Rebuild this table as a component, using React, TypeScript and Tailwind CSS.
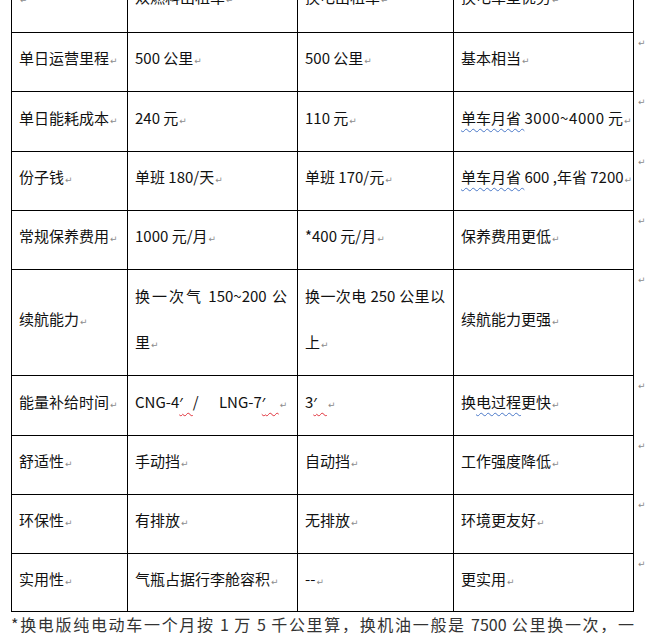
import React from "react";

const Mark = () => (
  <span className="ml-[1px] font-['DejaVu_Sans',sans-serif] text-[9px] leading-none text-[#8c8c8c]">↵</span>
);

const Blue = ({ children }: { children: React.ReactNode }) => (
  <span className="underline decoration-wavy decoration-[#4a78c8] decoration-1 underline-offset-[4px]">{children}</span>
);
const Red = ({ children }: { children: React.ReactNode }) => (
  <span className="underline decoration-wavy decoration-[#e0303a] decoration-1 underline-offset-[4px]">{children}</span>
);
const Prime = () => <span className="font-['Noto_Sans',sans-serif]">′</span>;

type Row = { h: string; cells: React.ReactNode[] };

const rows: Row[] = [
  { h: "h-[63px]", cells: [<></>, <>双燃料出租车</>, <>换电出租车</>, <>换电车型优势</>] },
  { h: "h-[59px]", cells: [<>单日运营里程</>, <>500 公里</>, <>500 公里</>, <>基本相当</>] },
  { h: "h-[60px]", cells: [<>单日能耗成本</>, <>240 元</>, <>110 元</>, <><Blue>单车月省 </Blue><span className="tracking-[0.6px]">3000~4000</span> 元</>] },
  { h: "h-[59px]", cells: [<>份子钱</>, <>单班 180/天</>, <>单班 170/元</>, <><Blue>单车月省 </Blue>600 ,年省 7200</>] },
  { h: "h-[59px]", cells: [<>常规保养费用</>, <>1000 元/月</>, <>*400 元/月</>, <>保养费用更低</>] },
  {
    h: "h-[106px]",
    cells: [<>续航能力</>, "wrap1", "wrap2", <>续航能力更强</>],
  },
  {
    h: "h-[60px]",
    cells: [
      <>能量补给时间</>,
      <span className="whitespace-pre">CNG-4<Red><Prime />   </Red>/      LNG-7<Red><Prime />    </Red></span>,
      <span className="whitespace-pre">3<Red><Prime />   </Red></span>,
      <>换<Blue>电过程</Blue>更快</>,
    ],
  },
  { h: "h-[59px]", cells: [<>舒适性</>, <>手动挡</>, <>自动挡</>, <>工作强度降低</>] },
  { h: "h-[59px]", cells: [<>环保性</>, <>有排放</>, <>无排放</>, <>环境更友好</>] },
  { h: "h-[58px]", cells: [<>实用性</>, <>气瓶占据行李舱容积</>, <>--</>, <>更实用</>] },
];

const widths = ["w-[117px] border-l", "w-[170px]", "w-[156px]", "w-[180px]"];

export default function App() {
  return (
    <div className="h-[633px] w-[645px] overflow-hidden bg-white font-['Noto_Sans_CJK_SC',sans-serif] text-[15px] text-[#111]">
      <div className="mt-[-30px] ml-[11px] flex flex-col">
        {rows.map((r, ri) => (
          <div key={ri} className={"flex " + r.h}>
            {r.cells.map((c, ci) => (
              <div
                key={ci}
                className={
                  "flex shrink-0 items-center overflow-hidden whitespace-nowrap border-r border-b border-black pb-[7px] pl-[7px] pr-[2px] " +
                  widths[ci]
                }
              >
                {c === "wrap1" ? (
                  <div className="flex w-[152px] flex-col leading-[46px]">
                    <span className="block text-justify [text-align-last:justify]">换一次气 150~200 公</span>
                    <span>
                      里<Mark />
                    </span>
                  </div>
                ) : c === "wrap2" ? (
                  <div className="flex w-[140px] flex-col leading-[46px]">
                    <span className="block text-justify [text-align-last:justify]">换一次电 250 公里以</span>
                    <span>
                      上<Mark />
                    </span>
                  </div>
                ) : (
                  <span>
                    {c}
                    <Mark />
                  </span>
                )}
              </div>
            ))}
            <div className="pl-[4px] pt-[6px] font-['DejaVu_Sans',sans-serif] text-[9px] leading-none text-[#8c8c8c]">↵</div>
          </div>
        ))}
      </div>
      <p className="ml-[11px] mt-[2px] w-[623px] whitespace-nowrap text-justify font-['Noto_Sans_CJK_SC',sans-serif] text-[16px] leading-[21px] text-[#333] [text-align-last:justify]">
        *换电版纯电动车一个月按 1 万 5 千公里算，换机油一般是 7500 公里换一次，一
      </p>
    </div>
  );
}
